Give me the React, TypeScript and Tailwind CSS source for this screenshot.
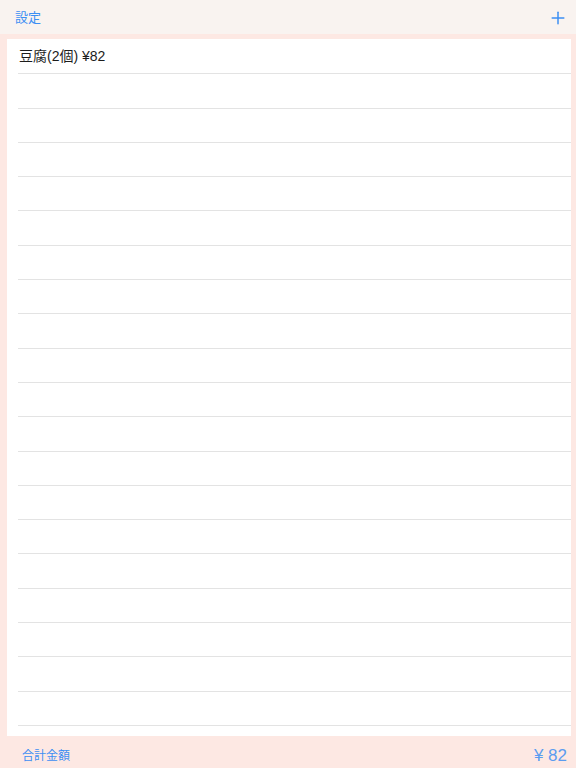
import { Plus } from 'lucide-react';

const items = ['豆腐(2個) ¥82'];
const ROWS = 20;

export default function App() {
  const rows = Array.from({ length: ROWS }, (_, i) => items[i] ?? '');

  return (
    <div
      className="flex h-screen w-full flex-col bg-[#fde8e3]"
      style={{ fontFamily: '"Liberation Sans", "Noto Sans CJK JP", sans-serif' }}
    >
      {/* ナビゲーションバー */}
      <div className="flex h-[34px] shrink-0 items-center justify-between bg-[#f9f3f0] pl-[15px] pr-[8px] pt-[1px]">
        <span className="text-[13px] text-[#3d8ff3]">設定</span>
        <Plus size={20} strokeWidth={1.8} className="text-[#3d8ff3]" />
      </div>

      {/* 一覧 */}
      <div className="pl-[7px] pr-[5px] pt-[5px]">
        <div className="h-[697px] bg-white pt-[1px]">
          {rows.map((text, i) => (
            <div key={i} className="h-[34.3px] pl-[11px]">
              <div className="flex h-full items-center border-b border-[#e3e3e3] pl-[1px] text-[14px] text-[#1c1c1c] whitespace-pre">
                {text}
              </div>
            </div>
          ))}
        </div>
      </div>

      {/* 合計 */}
      <div className="flex flex-1 items-center justify-between pl-[22px] pr-[9px] pt-[7px]">
        <span className="text-[12px] text-[#3d8ff3]">合計金額</span>
        <span className="text-[17px] text-[#5a9cf0]">¥ 82</span>
      </div>
    </div>
  );
}
